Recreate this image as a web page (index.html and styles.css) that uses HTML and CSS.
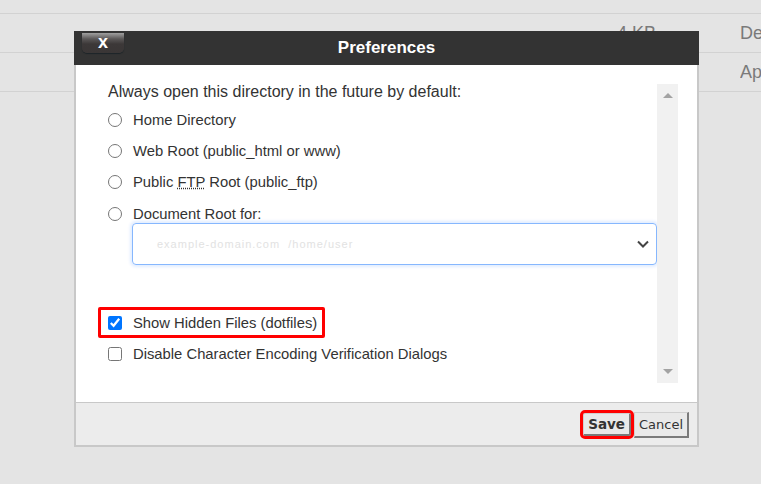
FILE: index.html
```html
<!DOCTYPE html>
<html lang="en">
<head>
    <meta charset="UTF-8">
    <meta name="viewport" content="width=device-width, initial-scale=1.0">
    <title>File Manager - Preferences</title>
    <link rel="stylesheet" href="styles.css">
</head>
<body>
    <!-- File list behind the dialog -->
    <div class="file-table">
        <div class="file-row"><span class="col-size">4 KB</span><span class="col-type">Mar</span></div>
        <div class="file-row"><span class="col-size">4 KB</span><span class="col-type">Dec</span></div>
        <div class="file-row"><span class="col-size"></span><span class="col-type">Apr</span></div>
    </div>

    <!-- Preferences dialog -->
    <div class="dialog">
        <div class="dialog-title">
            <button class="close-button">x</button>
            <span>Preferences</span>
        </div>
        <div class="dialog-body">
            <div class="pane">
                <p class="pane-heading">Always open this directory in the future by default:</p>
                <label class="option"><input type="radio" name="dir"><span>Home Directory</span></label>
                <label class="option"><input type="radio" name="dir"><span>Web Root (public_html or www)</span></label>
                <label class="option"><input type="radio" name="dir"><span>Public <abbr title="File Transfer Protocol">FTP</abbr> Root (public_ftp)</span></label>
                <label class="option"><input type="radio" name="dir"><span>Document Root for:</span></label>
                <div class="select-box">
                    <span class="select-value">example-domain.com&nbsp;&nbsp;/home/user</span>
                    <svg class="chevron" width="14" height="10" viewBox="0 0 14 10"><path d="M2 2.5 L7 7.5 L12 2.5" fill="none" stroke="#444" stroke-width="2"/></svg>
                </div>
                <div class="checks">
                    <label class="option highlight"><input type="checkbox" checked><span>Show Hidden Files (dotfiles)</span></label>
                    <label class="option"><input type="checkbox"><span>Disable Character Encoding Verification Dialogs</span></label>
                </div>
            </div>
            <div class="scrollbar">
                <span class="arrow-up"></span>
                <span class="arrow-down"></span>
            </div>
        </div>
        <div class="dialog-footer">
            <button class="btn btn-save">Save</button>
            <button class="btn">Cancel</button>
        </div>
    </div>
</body>
</html>
```

FILE: styles.css
```css
body {
    margin: 0;
    background-color: #e4e4e4;
    font-family: "Liberation Sans", Arial, sans-serif;
    overflow: hidden;
    height: 484px;
}
.file-table {
    margin-top: -25px;
}
.file-row {
    display: flex;
    height: 38px;
    align-items: center;
    border-bottom: 1px solid #d2d2d2;
    font-size: 18px;
    color: #7a7a7a;
    white-space: nowrap;
}
.col-size {
    flex-shrink: 0;
    margin-left: 617px;
    width: 123px;
}
.col-type {
    min-width: 0;
    overflow: hidden;
}
.dialog {
    position: absolute;
    left: 74px;
    top: 31px;
    width: 625px;
    display: flex;
    flex-direction: column;
}
.dialog-title {
    position: relative;
    height: 34px;
    background-color: #333333;
    color: white;
    font-weight: bold;
    font-size: 17px;
    display: flex;
    align-items: center;
    justify-content: center;
}
.close-button {
    position: absolute;
    left: 8px;
    top: 2px;
    width: 42px;
    height: 20px;
    border: none;
    border-radius: 0 0 5px 5px;
    background: linear-gradient(#a0a0a0 0%, #5a5757 30%, #3c3838 55%, #3a3636 100%);
    box-shadow: 0 1px 1px #1c2428;
    color: white;
    font-family: "Liberation Sans", Arial, sans-serif;
    font-weight: bold;
    font-size: 18px;
    line-height: 16px;
    padding: 0 0 3px 0;
}
.dialog-body {
    display: flex;
    height: 337px;
    background-color: white;
    border-left: 2px solid #c8c8c8;
    border-right: 2px solid #c8c8c8;
}
.pane {
    flex: 1;
    padding: 18px 0 0 31px;
    font-size: 14.8px;
    color: #333;
}
.pane-heading {
    margin: 0 0 3px 1px;
    line-height: 18px;
    font-size: 16px;
    white-space: nowrap;
}
.option {
    display: flex;
    align-items: center;
    height: 31.3px;
    white-space: nowrap;
}
.option input {
    margin: 0 11px 0 1px;
    width: 14px;
    height: 14px;
}
abbr {
    text-decoration: underline dotted;
}
.select-box {
    margin: -6px 0 0 25px;
    height: 40px;
    border: 1px solid #86b7fe;
    border-radius: 4px;
    box-shadow: 0 0 3px 2px rgba(13, 110, 253, 0.12);
    display: flex;
    align-items: center;
    justify-content: space-between;
    padding: 0 6px 0 24px;
}
.select-value {
    color: #e2e2e2;
    font-size: 11px;
    letter-spacing: 1px;
}
.checks {
    margin-top: 42px;
}
.highlight {
    margin-left: -9px;
    padding: 0 5px 0 6px;
    width: fit-content;
    height: 25px;
    border: 3px solid #ff0000;
    border-radius: 2px;
}
.scrollbar {
    width: 21px;
    margin: 19px 19px 19px 0;
    background-color: #f1f1f1;
    display: flex;
    flex-direction: column;
    justify-content: space-between;
    align-items: center;
    padding: 9px 0;
}
.arrow-up {
    border-left: 5px solid transparent;
    border-right: 5px solid transparent;
    border-bottom: 5px solid #a3a3a3;
}
.arrow-down {
    border-left: 5px solid transparent;
    border-right: 5px solid transparent;
    border-top: 5px solid #a3a3a3;
}
.dialog-footer {
    height: 42px;
    background-color: #ececec;
    border: 2px solid #c8c8c8;
    border-top: 1px solid #c8c8c8;
    display: flex;
    align-items: center;
    justify-content: flex-end;
    gap: 3px;
    padding-right: 8px;
}
.btn {
    font-family: "DejaVu Sans", Verdana, sans-serif;
    font-size: 13px;
    color: #333;
    background-color: #e9e9e9;
    border: 1px solid #d0d0d0;
    border-right-color: #7a7a7a;
    border-bottom-color: #7a7a7a;
    border-width: 1px 2px 2px 1px;
    height: 26px;
    padding: 0 4px;
    margin-top: 2px;
}
.btn-save {
    font-weight: bold;
    font-size: 13.5px;
    outline: 3px solid #ff0000;
    outline-offset: 0;
    border-radius: 2px;
    height: 23px;
    margin-top: 0;
}
```
